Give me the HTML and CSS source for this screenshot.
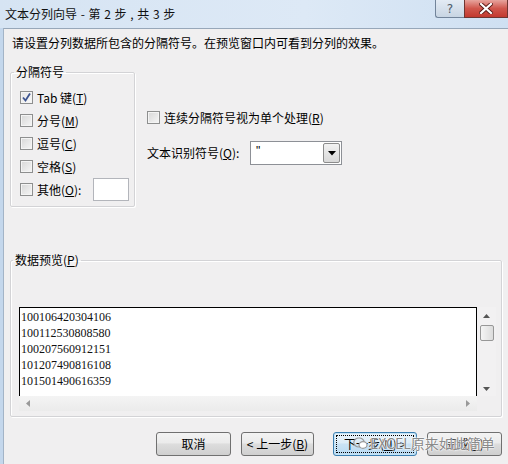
FILE: index.html
```html
<!DOCTYPE html>
<html lang="zh-CN">
<head>
<meta charset="utf-8">
<title>文本分列向导</title>
<link rel="stylesheet" href="styles.css">
</head>
<body>
<div class="window">
  <div class="titlebar">
    <span class="title">文本分列向导 - 第 2 步 , 共 3 步</span>
    <div class="caption-btns">
      <div class="cbtn help">?</div>
      <div class="cbtn close">
        <svg width="14" height="11" viewBox="0 0 14 11"><path d="M2 1 L12 10 M12 1 L2 10" stroke="#5a1a16" stroke-width="4" stroke-linecap="square"/><path d="M2 1 L12 10 M12 1 L2 10" stroke="#ffffff" stroke-width="2.2" stroke-linecap="square"/></svg>
      </div>
    </div>
  </div>
  <div class="client">
    <p class="intro">请设置分列数据所包含的分隔符号。在预览窗口内可看到分列的效果。</p>
    <div class="top-row">
      <fieldset class="group sep">
        <legend>分隔符号</legend>
        <div class="row"><span class="cb checked"><svg width="11" height="11" viewBox="0 0 11 11"><path d="M2 5.5 L4.5 8.5 L9 1.5" fill="none" stroke="#3d5490" stroke-width="1.8"/></svg></span>Tab 键(<u>T</u>)</div>
        <div class="row"><span class="cb"></span>分号(<u>M</u>)</div>
        <div class="row"><span class="cb"></span>逗号(<u>C</u>)</div>
        <div class="row"><span class="cb"></span>空格(<u>S</u>)</div>
        <div class="row"><span class="cb"></span>其他(<u>O</u>):<span class="textbox"></span></div>
      </fieldset>
      <div class="options">
        <div class="row consec"><span class="cb"></span>连续分隔符号视为单个处理(<u>R</u>)</div>
        <div class="row qualifier">
          <span class="qlabel">文本识别符号(<u>Q</u>):</span>
          <div class="combo">
            <span class="val">"</span>
            <span class="drop"><svg width="8" height="5" viewBox="0 0 8 5"><path d="M0 0 H8 L4 4.5 Z" fill="#000"/></svg></span>
          </div>
        </div>
      </div>
    </div>
    <fieldset class="group preview">
      <legend>数据预览(<u>P</u>)</legend>
      <div class="grid">
        <div class="data">
          <div>100106420304106</div>
          <div>100112530808580</div>
          <div>100207560912151</div>
          <div>101207490816108</div>
          <div>101501490616359</div>
        </div>
        <div class="vscroll">
          <span class="arrow"><svg width="7" height="4" viewBox="0 0 7 4"><path d="M0 4 L3.5 0 L7 4 Z" fill="#555"/></svg></span>
          <span class="thumb"></span>
          <span class="spacer"></span>
          <span class="arrow"><svg width="7" height="4" viewBox="0 0 7 4"><path d="M0 0 L7 0 L3.5 4 Z" fill="#555"/></svg></span>
        </div>
        <div class="hscroll">
          <span class="harrow"><svg width="4" height="7" viewBox="0 0 4 7"><path d="M4 0 L0 3.5 L4 7 Z" fill="#999"/></svg></span>
          <span class="harrow"><svg width="4" height="7" viewBox="0 0 4 7"><path d="M0 0 L4 3.5 L0 7 Z" fill="#999"/></svg></span>
        </div>
        <div class="corner"></div>
      </div>
    </fieldset>
    <div class="buttons">
      <button class="btn w-cancel">取消</button>
      <button class="btn w-back">&lt; 上一步(<u>B</u>)</button>
      <button class="btn w-next focused"><span class="focus-ring">下一步(<u>N</u>) &gt;</span></button>
      <button class="btn w-finish">完成(<u>F</u>)</button>
      <div class="watermark">
        <svg width="15" height="13" viewBox="0 0 15 13"><ellipse cx="6" cy="5.5" rx="5.2" ry="4.5" fill="none" stroke="#9a9a9a" stroke-width="1.2"/><ellipse cx="10" cy="8" rx="4" ry="3.4" fill="#fff" stroke="#9a9a9a" stroke-width="1.2"/></svg>
        <span>EXCEL原来如此简单</span>
      </div>
    </div>
  </div>
</div>
</body>
</html>
```

FILE: styles.css
```css
* { box-sizing: border-box; }

html, body {
  margin: 0;
  padding: 0;
}

body {
  width: 508px;
  height: 464px;
  overflow: hidden;
  font-family: "Noto Sans CJK SC", "Noto Sans", sans-serif;
  font-size: 12px;
  color: #000;
}

.window {
  width: 508px;
  height: 464px;
  display: flex;
  flex-direction: column;
  background: #c4d7ec;
}

.titlebar {
  height: 28px;
  flex: none;
  display: flex;
  justify-content: space-between;
  align-items: flex-start;
  background: linear-gradient(to right, #d6e4f3, #dde9f6 60%, #cfe0f2);
}

.title {
  margin: 6px 0 0 5px;
  font-size: 12px;
  line-height: 16px;
  color: #111;
  word-spacing: 1px;
}

.caption-btns {
  display: flex;
}

.cbtn {
  height: 18px;
  display: flex;
  align-items: center;
  justify-content: center;
}

.help {
  width: 29px;
  border: 1px solid #72849a;
  border-top: none;
  border-right: none;
  border-radius: 0 0 0 3px;
  background: linear-gradient(#e3ebf4, #c8d5e3);
  color: #4d5a68;
  font-family: "DejaVu Sans", sans-serif;
  font-size: 12px;
  line-height: 16px;
}

.close {
  width: 44px;
  border: 1px solid #6f3531;
  border-top: none;
  background: linear-gradient(#e7a49d, #d0564c 50%, #c2392f);
}

.client {
  flex: 1;
  margin-left: 3px;
  border-left: 1px solid #a3b4c7;
  border-top: 1px solid #97a7b9;
  background: #f0eff0;
  display: flex;
  flex-direction: column;
}

.intro {
  margin: 6px 0 0 8px;
  line-height: 16px;
}

.top-row {
  display: flex;
  margin: 13px 0 0 6px;
}

.group {
  margin: 0;
  border: 1px solid #d3d3d6;
  box-shadow: 1px 1px 0 #ffffff, inset 1px 1px 0 #ffffff;
  border-radius: 2px;
}

.group legend {
  margin-left: -6px;
  padding: 0 2px;
  line-height: 16px;
}

.sep {
  width: 125px;
  padding: 6px 5px 5px 9px;
}

.row {
  height: 23px;
  display: flex;
  align-items: center;
  line-height: 16px;
  white-space: nowrap;
}

.cb {
  width: 13px;
  height: 13px;
  flex: none;
  margin-right: 4px;
  border: 1px solid #8e8f8f;
  background: linear-gradient(135deg, #d7d7d7, #f6f6f6);
  box-shadow: inset 0 0 0 1px #f4f4f4;
  display: flex;
  align-items: center;
  justify-content: center;
}

.cb.checked {
  background: linear-gradient(135deg, #e4e4e4, #fafafa);
}

.textbox {
  margin-left: auto;
  width: 36px;
  height: 23px;
  border: 1px solid #b3b5bb;
  background: #fff;
}

.options {
  margin-left: 12px;
  padding-top: 42px;
}

.consec {
  margin-bottom: 12px;
}

.qualifier {
  height: 24px;
}

.qlabel {
  width: 103px;
}

.combo {
  width: 92px;
  height: 24px;
  border: 1px solid #8d9096;
  background: #fff;
  display: flex;
  align-items: stretch;
}

.combo .val {
  flex: 1;
  padding-left: 5px;
  line-height: 18px;
  font-family: "Liberation Sans", sans-serif;
}

.combo .drop {
  width: 17px;
  margin: 1px;
  border: 1px solid #8c8c8c;
  border-radius: 2px;
  background: linear-gradient(#f2f2f2, #d8d8d8);
  display: flex;
  align-items: center;
  justify-content: center;
}

.preview {
  width: 492px;
  margin: 45px 0 0 6px;
  padding: 39px 0 5px 8px;
}

.grid {
  display: grid;
  grid-template-columns: 458px 19px;
  grid-template-rows: 89px 15px;
}

.data {
  background: #fff;
  border: 1px solid #000;
  border-bottom: none;
  padding: 1px 0 0 1px;
  font-family: "Liberation Serif", serif;
  font-size: 12px;
  line-height: 16px;
  color: #111;
  overflow: hidden;
}

.vscroll {
  display: flex;
  flex-direction: column;
  align-items: center;
  background: #f2f1f2;
  padding: 1px 2px 0;
}

.vscroll .arrow {
  height: 15px;
  display: flex;
  align-items: center;
  justify-content: center;
}

.vscroll .thumb {
  width: 14px;
  height: 16px;
  margin-top: 2px;
  border: 1px solid #979797;
  border-radius: 2px;
  background: linear-gradient(to right, #f4f4f4, #dcdcdc);
}

.vscroll .spacer {
  flex: 1;
}

.hscroll {
  display: flex;
  justify-content: space-between;
  align-items: center;
  padding: 0 7px 0 7px;
  background: linear-gradient(#f4f4f4, #ebebeb);
}

.harrow {
  display: flex;
}

.corner {
  background: #f0eff0;
}

.buttons {
  position: relative;
  display: flex;
  justify-content: flex-end;
  margin-top: 15px;
  padding-right: 6px;
}

.btn {
  height: 24px;
  padding: 0;
  border: 1px solid #707070;
  border-radius: 3px;
  background: linear-gradient(#f3f3f3, #ebebeb 45%, #dddddd 50%, #cfcfcf);
  font-family: "Noto Sans CJK SC", "Noto Sans", sans-serif;
  font-size: 12px;
  line-height: 16px;
  color: #000;
  display: flex;
  align-items: center;
  justify-content: center;
}

.w-cancel { width: 75px; }
.w-back { width: 73px; margin-left: 10px; }
.w-next { width: 84px; margin-left: 19px; }
.w-finish { width: 75px; margin-left: 10px; }

.btn.focused {
  border-color: #3c7fb1;
  background: linear-gradient(#eaf4fb, #dcecf8 45%, #c9e2f5 50%, #b9daf2);
  box-shadow: inset 0 0 0 1px #c5e4f7;
  padding: 2px;
}

.focus-ring {
  width: 100%;
  height: 100%;
  border: 1px dotted #000;
  display: flex;
  align-items: center;
  justify-content: center;
}

.watermark {
  position: absolute;
  left: 349px;
  top: 2px;
  display: flex;
  align-items: center;
  gap: 2px;
  color: #8a8a8a;
  font-size: 14px;
  line-height: 18px;
  text-shadow: 0 0 2px #fff, 0 0 2px #fff, 0 0 1px #fff;
  pointer-events: none;
}
```
